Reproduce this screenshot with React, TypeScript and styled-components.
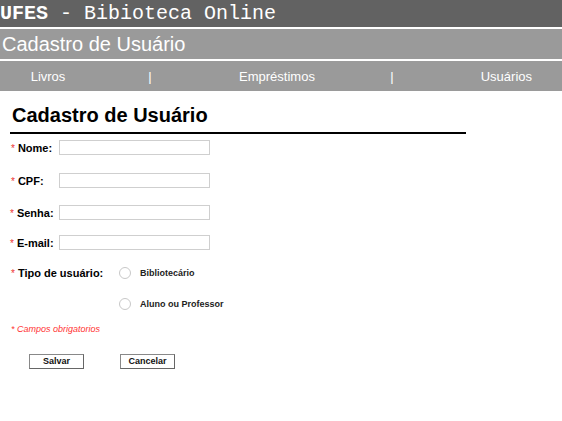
import React from "react";
import styled, { createGlobalStyle } from "styled-components";

const Global = createGlobalStyle`
  html, body { margin: 0; padding: 0; background: #fff; }
  body { font-family: "Liberation Sans", Arial, sans-serif; }
`;

const TopBar = styled.div`
  height: 27px;
  background: #626262;
  color: #fff;
  font-family: "Liberation Mono", "Courier New", monospace;
  font-size: 20px;
  line-height: 27px;
  white-space: pre;
  border-bottom: 2px solid #fff;
  b { font-weight: bold; }
`;

const TitleBar = styled.div`
  height: 30px;
  background: #9a9a9a;
  color: #fff;
  font-size: 20px;
  line-height: 31px;
  padding-left: 2px;
  border-bottom: 2px solid #fff;
`;

const Nav = styled.nav`
  height: 30px;
  background: #9a9a9a;
  color: #fff;
  font-size: 13px;
  display: grid;
  grid-template-columns: 96px 108px 146px 84px 1fr;
  justify-items: center;
  align-items: center;
  padding-right: 30px;
`;

const NavItem = styled.span<{ $end?: boolean }>`
  white-space: nowrap;
  justify-self: ${(p) => (p.$end ? "end" : "center")};
`;

const Content = styled.div`
  padding: 12px 0 0 10px;
`;

const Heading = styled.h1`
  margin: 0;
  padding-left: 2px;
  width: 454px;
  font-size: 20px;
  font-weight: bold;
  color: #000;
  line-height: 24px;
  padding-bottom: 5px;
  border-bottom: 2px solid #000;
`;

const Row = styled.div<{ $mt: number }>`
  display: flex;
  align-items: center;
  margin-top: ${(p) => p.$mt}px;
  height: 15px;
`;

const Label = styled.label<{ $w: number; $ml?: number }>`
  flex: 0 0 ${(p) => p.$w}px;
  min-width: 0;
  margin-left: ${(p) => p.$ml ?? 1}px;
  font-size: 11px;
  font-weight: bold;
  color: #000;
  white-space: nowrap;
`;

const Star = styled.span`
  color: #e33;
  font-weight: normal;
  font-size: 10px;
  margin-right: 3px;
`;

const Input = styled.input`
  box-sizing: border-box;
  width: 151px;
  height: 15px;
  border: 1px solid #cfcfcf;
  padding: 0;
  margin: 0;
  background: #fff;
`;

const RadioRow = styled.div<{ $mt: number; $ml: number }>`
  display: flex;
  align-items: center;
  margin-top: ${(p) => p.$mt}px;
  margin-left: ${(p) => p.$ml}px;
`;

const Radio = styled.span`
  box-sizing: border-box;
  flex: 0 0 12px;
  height: 12px;
  border: 1px solid #c8c8c8;
  border-radius: 50%;
  margin-right: 9px;
  background: #fff;
`;

const RadioText = styled.span`
  font-size: 9px;
  font-weight: bold;
  color: #222;
`;

const Required = styled.div`
  margin-top: 14px;
  margin-left: 1px;
  color: #f33;
  font-size: 9px;
  font-style: italic;
`;

const Buttons = styled.div`
  display: flex;
  gap: 36px;
  margin-top: 20px;
  margin-left: 19px;
`;

const Button = styled.button`
  box-sizing: border-box;
  width: 55px;
  height: 15px;
  padding: 0;
  border: 1px solid #888;
  border-bottom-color: #666;
  border-right-color: #666;
  background: #fff;
  font-family: "Liberation Sans", Arial, sans-serif;
  font-size: 9px;
  font-weight: bold;
  color: #111;
  line-height: 13px;
`;

export default function App() {
  return (
    <>
      <Global />
      <TopBar>
        <b>UFES</b> - Bibioteca Online
      </TopBar>
      <TitleBar>Cadastro de Usuário</TitleBar>
      <Nav>
        <NavItem>Livros</NavItem>
        <NavItem>|</NavItem>
        <NavItem>Empréstimos</NavItem>
        <NavItem>|</NavItem>
        <NavItem $end>Usuários</NavItem>
      </Nav>
      <Content>
        <Heading>Cadastro de Usuário</Heading>
        <Row $mt={6}>
          <Label $w={48}>
            <Star>*</Star>Nome:
          </Label>
          <Input />
        </Row>
        <Row $mt={18}>
          <Label $w={48}>
            <Star>*</Star>CPF:
          </Label>
          <Input />
        </Row>
        <Row $mt={17}>
          <Label $w={49} $ml={0}>
            <Star>*</Star>Senha:
          </Label>
          <Input />
        </Row>
        <Row $mt={15}>
          <Label $w={49} $ml={0}>
            <Star>*</Star>E-mail:
          </Label>
          <Input />
        </Row>
        <Row $mt={15}>
          <Label $w={108}>
            <Star>*</Star>Tipo de usuário:
          </Label>
          <Radio />
          <RadioText>Bibliotecário</RadioText>
        </Row>
        <RadioRow $mt={18} $ml={109}>
          <Radio />
          <RadioText>Aluno ou Professor</RadioText>
        </RadioRow>
        <Required>* Campos obrigatorios</Required>
        <Buttons>
          <Button>Salvar</Button>
          <Button>Cancelar</Button>
        </Buttons>
      </Content>
    </>
  );
}
